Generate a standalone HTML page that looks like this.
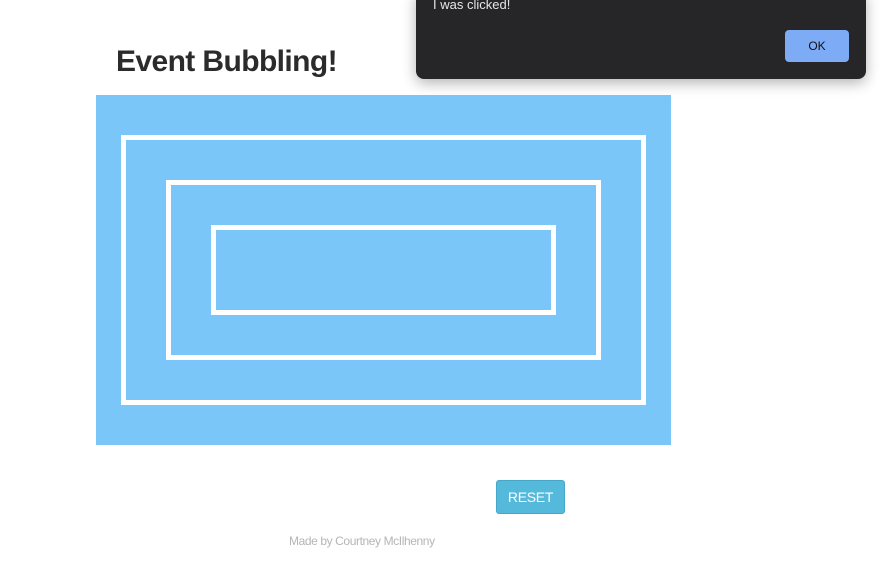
<!DOCTYPE html>
<html><head><style>
body{margin:0;width:885px;height:565px;background:#fff;position:relative;overflow:hidden;font-family:"Liberation Sans",sans-serif}
h1{position:absolute;left:116px;top:45px;margin:0;font-size:30px;font-weight:bold;color:#2b2b2b;letter-spacing:-0.6px}
.box{position:absolute;left:96px;top:95px;width:575px;height:350px;background:#7bc6f8}
.r{position:absolute;border:5px solid #fff;box-sizing:border-box}
.btn{position:absolute;left:496px;top:480px;width:69px;height:34px;background:#54b9da;border-radius:3px;border:1px solid #46a8c9;box-sizing:border-box;color:#fff;font-size:14px;text-align:center;line-height:32px;letter-spacing:-0.3px}
.foot{position:absolute;left:289px;top:534px;font-size:12px;color:#b5b5b5;letter-spacing:-0.4px}
.dlg{position:absolute;left:416px;top:-10px;width:450px;height:89px;background:#262628;border-radius:8px;box-shadow:0 4px 14px rgba(0,0,0,.3)}
.dlg .t{position:absolute;left:17px;top:7px;color:#e6e6e6;font-size:13px}
.ok{position:absolute;left:369px;top:40px;width:64px;height:32px;background:#7eabf5;border-radius:4px;color:#111;font-size:12px;text-align:center;line-height:32px}
</style></head><body>
<h1>Event Bubbling!</h1>
<div class="box"></div>
<div class="r" style="left:121px;top:135px;width:525px;height:270px"></div>
<div class="r" style="left:166px;top:180px;width:435px;height:180px"></div>
<div class="r" style="left:211px;top:225px;width:345px;height:90px"></div>
<div class="btn">RESET</div>
<div class="foot">Made by Courtney McIlhenny</div>
<div class="dlg"><div class="t">I was clicked!</div><div class="ok">OK</div></div>
</body></html>
